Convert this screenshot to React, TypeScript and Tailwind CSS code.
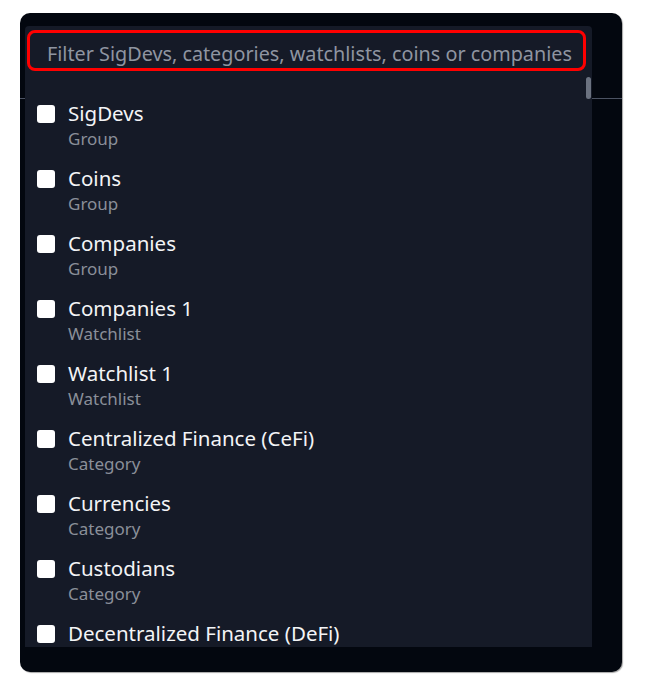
import React from "react";

const items: { title: string; sub?: string }[] = [
  { title: "SigDevs", sub: "Group" },
  { title: "Coins", sub: "Group" },
  { title: "Companies", sub: "Group" },
  { title: "Companies 1", sub: "Watchlist" },
  { title: "Watchlist 1", sub: "Watchlist" },
  { title: "Centralized Finance (CeFi)", sub: "Category" },
  { title: "Currencies", sub: "Category" },
  { title: "Custodians", sub: "Category" },
  { title: "Decentralized Finance (DeFi)", sub: "Category" },
];

export default function App() {
  return (
    <div
      className="w-[652px] h-[688px] bg-white pt-[13px] pl-[20px]"
      style={{ fontFamily: '"Noto Sans", "Open Sans", sans-serif' }}
    >
      <div className="relative w-[602px] h-[659px] rounded-[10px] bg-[#03070f] shadow-[1px_1px_1px_rgba(0,0,0,0.35)] pt-[13px] pl-[5px]">
        <div className="absolute left-0 right-0 top-[85px] h-px bg-[#4b5262]" />
        <div className="relative w-[567px] h-[621px] rounded-t-[4px] bg-[#151a27] flex flex-col overflow-hidden">
          <div className="px-[2px] pt-[4px]">
            <div className="h-[41px] w-[559px] rounded-[8px] border-[3px] border-[#ff0000] bg-[#151a27] flex items-center pl-[17px] pt-[7px]">
              <span className="text-[19.8px] leading-[28px] text-[#8f95a1] whitespace-nowrap">
                Filter SigDevs, categories, watchlists, coins or companies
              </span>
            </div>
          </div>
          <div className="relative flex-1 overflow-hidden">
            <div className="absolute right-[1px] top-[6px] w-[5px] h-[22px] rounded-full bg-[#6b7280]" />
            <div className="flex flex-col pt-[28px]">
              {items.map((it) => (
                <div key={it.title} className="flex h-[65px] pl-[12px]">
                  <div className="w-[18px] h-[18px] mt-[6px] rounded-[3px] bg-white shrink-0" />
                  <div className="ml-[13px] flex flex-col">
                    <span className="text-[20.5px] leading-[28px] text-[#f3f4f6] whitespace-nowrap">
                      {it.title}
                    </span>
                    <span className="text-[17px] leading-[24px] text-[#8a8f99] whitespace-nowrap">
                      {it.sub}
                    </span>
                  </div>
                </div>
              ))}
            </div>
          </div>
        </div>
      </div>
    </div>
  );
}
